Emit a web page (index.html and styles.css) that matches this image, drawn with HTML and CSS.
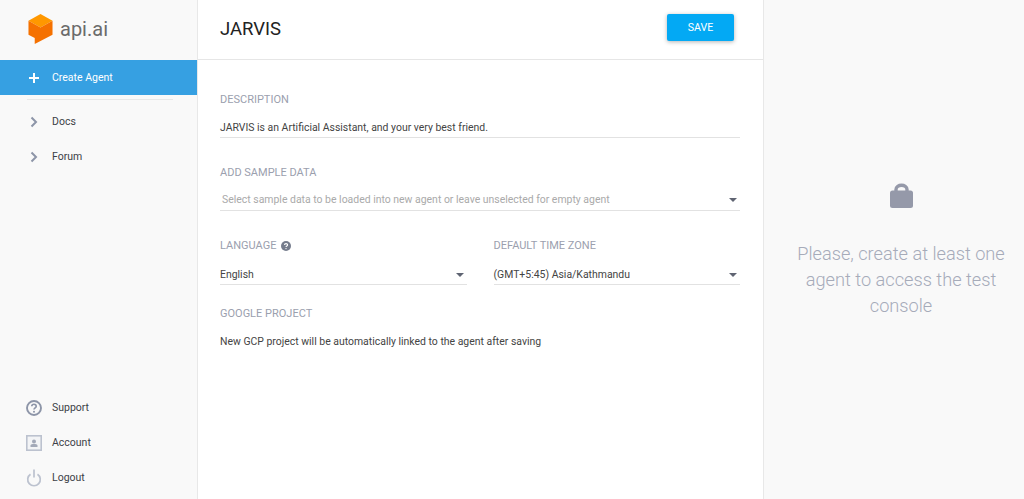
FILE: index.html
```html
<!DOCTYPE html>
<html lang="en">
<head>
<meta charset="utf-8">
<title>JARVIS</title>
<link rel="stylesheet" href="styles.css">
</head>
<body>
<div class="app">
  <aside class="sidebar">
    <div class="logo">
      <svg class="logo-mark" width="25" height="31" viewBox="0 0 26 32">
        <path d="M13 1 L25.5 8 L13 15 L0.5 8 Z" fill="#ff9800"/>
        <path d="M0.5 8 L13 15 L25.5 8 V22.5 L13 29 L7 32 V26 L0.5 22.5 Z" fill="#f57100"/>
      </svg>
      <span class="logo-text">api.ai</span>
    </div>
    <a class="nav-item active">
      <svg class="nav-icon" width="12" height="12" viewBox="0 0 12 12"><path d="M6 1v10M1 6h10" stroke="#fff" stroke-width="2" fill="none"/></svg>
      <span>Create Agent</span>
    </a>
    <div class="divider"></div>
    <a class="nav-item">
      <svg class="nav-icon" width="12" height="12" viewBox="0 0 12 12"><path d="M3.5 1.5 L8 6 L3.5 10.5" stroke="#8d95a8" stroke-width="2" fill="none"/></svg>
      <span>Docs</span>
    </a>
    <a class="nav-item">
      <svg class="nav-icon" width="12" height="12" viewBox="0 0 12 12"><path d="M3.5 1.5 L8 6 L3.5 10.5" stroke="#8d95a8" stroke-width="2" fill="none"/></svg>
      <span>Forum</span>
    </a>
    <div class="spacer"></div>
    <a class="nav-item foot">
      <svg class="foot-icon" width="16" height="16" viewBox="0 0 16 16"><circle cx="8" cy="8" r="7" stroke="#8d95a8" stroke-width="1.9" fill="none"/><path d="M5.8 6.3 C5.8 3.6 10.2 3.6 10.2 6.2 C10.2 7.9 8 7.8 8 9.6" stroke="#8d95a8" stroke-width="1.7" fill="none"/><circle cx="8" cy="11.7" r="1" fill="#8d95a8"/></svg>
      <span>Support</span>
    </a>
    <a class="nav-item foot">
      <svg class="foot-icon" width="16" height="16" viewBox="0 0 16 16"><rect x="0.8" y="0.8" width="14.4" height="14.4" stroke="#bcc2cf" stroke-width="1.6" fill="#f3f4f6"/><circle cx="8" cy="6.5" r="2" fill="#a3a9b8"/><path d="M4.5 12 V10.5 C4.5 9.3 6.5 9 8 9 C9.5 9 11.5 9.3 11.5 10.5 V12 Z" fill="#a3a9b8"/></svg>
      <span>Account</span>
    </a>
    <a class="nav-item foot">
      <svg class="foot-icon" width="16" height="18" viewBox="0 0 16 18"><path d="M4.5 5.2 A6.3 6.3 0 1 0 11.5 5.2" stroke="#bcc2cf" stroke-width="1.7" fill="none"/><path d="M8 0.5 V8.5" stroke="#bcc2cf" stroke-width="1.7" fill="none"/></svg>
      <span>Logout</span>
    </a>
  </aside>
  <main class="main">
    <header class="topbar">
      <h1 class="title">JARVIS</h1>
      <button class="save">SAVE</button>
    </header>
    <form class="form">
      <div class="field desc">
        <div class="label">DESCRIPTION</div>
        <div class="value">JARVIS is an Artificial Assistant, and your very best friend.</div>
      </div>
      <div class="field sample">
        <div class="label">ADD SAMPLE DATA</div>
        <div class="value select placeholder"><span>Select sample data to be loaded into new agent or leave unselected for empty agent</span><i class="caret"></i></div>
      </div>
      <div class="row">
        <div class="field">
          <div class="label">LANGUAGE
            <svg class="help" width="10" height="10" viewBox="0 0 10 10"><circle cx="5" cy="5" r="5" fill="#757c8c"/><path d="M3.5 4 C3.5 2.2 6.6 2.2 6.6 3.9 C6.6 5 5 5 5 6.1" stroke="#fff" stroke-width="1.1" fill="none"/><circle cx="5" cy="7.6" r=".7" fill="#fff"/></svg>
          </div>
          <div class="value select"><span>English</span><i class="caret"></i></div>
        </div>
        <div class="field">
          <div class="label">DEFAULT TIME ZONE</div>
          <div class="value select"><span>(GMT+5:45) Asia/Kathmandu</span><i class="caret"></i></div>
        </div>
      </div>
      <div class="field project">
        <div class="label">GOOGLE PROJECT</div>
        <div class="note">New GCP project will be automatically linked to the agent after saving</div>
      </div>
    </form>
  </main>
  <aside class="console">
    <svg class="lock" width="23" height="25" viewBox="0 0 23 25"><path d="M6 9 V6.5 C6 0.8 17 0.8 17 6.5 V9" stroke="#9599a9" stroke-width="3.4" fill="none"/><rect x="0" y="7.5" width="23" height="17.5" rx="2.5" fill="#9599a9"/></svg>
    <p class="console-text">Please, create at least one agent to access the test console</p>
  </aside>
</div>
</body>
</html>
```

FILE: styles.css
```css
* { box-sizing: border-box; }
html, body { margin: 0; height: 100%; overflow: hidden; }
body { font-family: Roboto, "Liberation Sans", sans-serif; background: #fff; color: #333; }
.app { display: flex; height: 499px; }

.sidebar { width: 198px; flex: none; background: #f9f9f9; border-right: 1px solid #e8e8e8; display: flex; flex-direction: column; }
.logo { height: 60px; flex: none; display: flex; align-items: center; padding-left: 28px; gap: 7px; }
.logo-mark { margin-top: -3px; }
.logo-text { font-size: 20px; color: #6b6b6b; margin-top: -3px; }
.nav-item { height: 35px; flex: none; display: flex; align-items: center; font-size: 10.5px; color: #3c3f47; padding: 0 0 0 28px; }
.nav-item.active { background: #36a0e2; color: #fff; }
.nav-icon { margin-right: 12px; flex: none; }
.foot { padding-left: 26px; }
.foot-icon { margin-right: 10px; flex: none; }
.divider { height: 1px; background: #e8e8e8; margin: 4px 24px 4px 27px; flex: none; }
.spacer { flex: 1; }
.foot:last-child { margin-bottom: 4px; }

.main { width: 565px; flex: none; }
.topbar { height: 60px; border-bottom: 1px solid #e6e6e6; display: flex; align-items: center; justify-content: space-between; padding: 0 29px 4px 22px; }
.title { margin: 2px 0 0; font-size: 18.5px; font-weight: 400; color: #222; }
.save { width: 67px; height: 27px; background: #03a9f4; color: #fff; border: 0; border-radius: 2px; font: 400 10.6px Roboto, sans-serif; box-shadow: 0 1px 4px rgba(0,0,0,.3); }
.form { width: 520px; margin-left: 22px; padding-top: 33px; }
.label { font-size: 11px; line-height: 13px; color: #9ba0ae; display: flex; align-items: center; gap: 5px; font-weight: 400; }
.value { font-size: 10.45px; line-height: 14px; color: #444; border-bottom: 1px solid #e2e2e2; padding: 15px 0 3px; height: 32px; }
.select { display: flex; justify-content: space-between; align-items: center; height: 33px; }
.placeholder { color: #aaa; padding: 14px 0 4px 2px; height: 32px; }
.caret { width: 0; height: 0; border: 4px solid transparent; border-top: 4px solid #5f6472; border-bottom: 0; margin-right: 3px; }
.sample { margin-top: 28px; }
.row { display: flex; gap: 27px; margin-top: 28px; }
.row .field { flex: 1; }
.row .select { padding: 16px 0 2px; }
.project { margin-top: 22px; }
.note { font-size: 10.45px; line-height: 14px; margin-top: 15px; color: #444; }

.console { flex: 1; background: #f9f9f9; border-left: 1px solid #e8e8e8; display: flex; flex-direction: column; align-items: center; padding: 183px 0 0 14px; }
.lock { flex: none; }
.console-text { width: 220px; margin: 32.5px 0 0; font-size: 18.2px; line-height: 26.2px; font-weight: 300; color: #a6abb9; text-align: center; }
```
